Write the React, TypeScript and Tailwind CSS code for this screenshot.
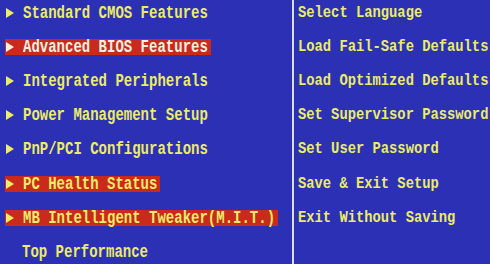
import React from "react";

const Arrow = () => (
  <svg width="8" height="10" viewBox="0 0 8 10" className="shrink-0">
    <polygon points="0,0 8,5 0,10" fill="currentColor" />
  </svg>
);

type Item = { label: string; arrow: boolean; selected?: boolean; white?: boolean };

const left: Item[] = [
  { label: "Standard CMOS Features", arrow: true },
  { label: "Advanced BIOS Features", arrow: true, selected: true, white: true },
  { label: "Integrated Peripherals", arrow: true },
  { label: "Power Management Setup", arrow: true },
  { label: "PnP/PCI Configurations", arrow: true },
  { label: "PC Health Status", arrow: true, selected: true },
  { label: "MB Intelligent Tweaker(M.I.T.)", arrow: true, selected: true },
  { label: "Top Performance", arrow: false },
];

const right = [
  "Select Language",
  "Load Fail-Safe Defaults",
  "Load Optimized Defaults",
  "Set Supervisor Password",
  "Set User Password",
  "Save & Exit Setup",
  "Exit Without Saving",
];

export default function App() {
  return (
    <div
      className="w-[490px] h-[264px] overflow-hidden bg-[#2b30b4] flex text-[#ecec68] font-bold"
      style={{ fontFamily: '"Liberation Mono", "DejaVu Sans Mono", monospace' }}
    >
      <div className="w-[292px] shrink-0 flex flex-col -mt-[4px]">
        {left.map((it) => (
          <div key={it.label} className="h-[34.1px] shrink-0 flex items-center pl-[5px]">
            <span
              className={
                "inline-flex items-center h-[16px] pr-[3px] " +
                (it.selected ? "bg-[#c92a1c] " : "") +
                (it.white ? "text-[#f4f0e0] " : "")
              }
            >
              {it.arrow ? (
                <span className="w-[18px] pl-[1px] flex items-center">
                  <Arrow />
                </span>
              ) : (
                <span className="w-[17px]" />
              )}
              <span className="text-[14px] leading-[16px] whitespace-nowrap inline-block scale-y-125">
                {it.label}
              </span>
            </span>
          </div>
        ))}
      </div>
      <div className="w-[2px] shrink-0 bg-[#dcdcf0]" />
      <div className="flex-1 flex flex-col -mt-[4px] pl-[4px]">
        {right.map((r) => (
          <div key={r} className="h-[34.1px] shrink-0 flex items-center">
            <span className="text-[13.8px] leading-[16px] whitespace-nowrap inline-block scale-y-125 origin-left">
              {r}
            </span>
          </div>
        ))}
      </div>
    </div>
  );
}
